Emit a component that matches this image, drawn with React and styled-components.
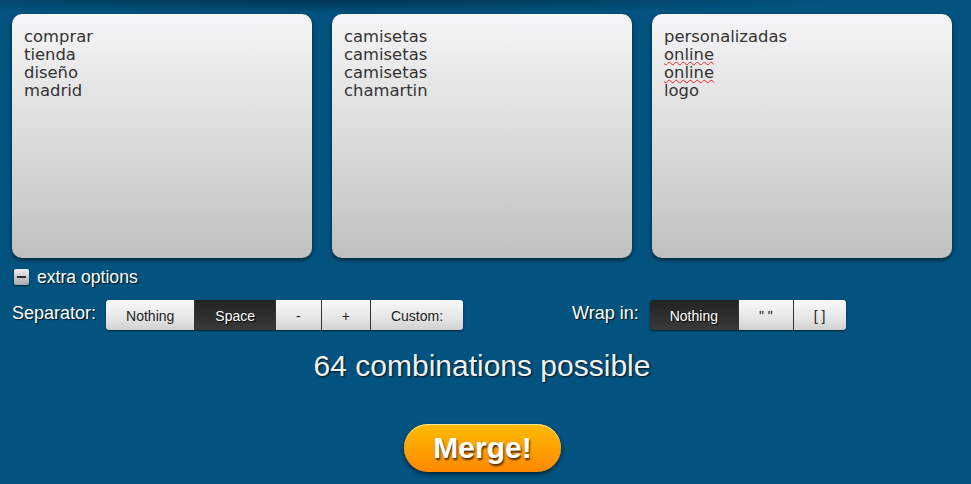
import React from "react";
import styled, { createGlobalStyle } from "styled-components";

const Global = createGlobalStyle`
  html, body { margin: 0; padding: 0; }
  body {
    background: #02537f;
    font-family: "Liberation Sans", Arial, sans-serif;
    width: 971px;
    height: 484px;
    overflow: hidden;
  }
`;

const Page = styled.div`
  position: relative;
  min-height: 484px;
  padding: 14px 12px 0 12px;
  box-sizing: border-box;
  background: radial-gradient(ellipse 520px 14px at 330px 0, rgba(0,0,0,0.35), rgba(0,0,0,0) 100%), #02537f;
`;

const Boxes = styled.div`
  display: grid;
  grid-template-columns: repeat(3, 300px);
  gap: 20px;
`;

const Box = styled.div`
  height: 244px;
  box-sizing: border-box;
  padding: 14px 12px;
  border-radius: 10px;
  background: linear-gradient(to bottom, #f6f5f7 0%, #dedede 45%, #c0c0c0 100%);
  box-shadow: 0 2px 4px rgba(0, 0, 0, 0.55);
  font-family: "DejaVu Sans", Verdana, sans-serif;
  font-size: 16.4px;
  line-height: 18px;
  color: #333;
`;

const Word = styled.div`
  white-space: nowrap;
  ${(p) =>
    p.$misspelled &&
    `text-decoration: underline wavy #e22;
     text-decoration-thickness: 1px;
     text-underline-offset: 1px;`}
`;

const Toggle = styled.div`
  display: flex;
  align-items: center;
  gap: 8px;
  margin-top: 10px;
  margin-left: 2px;
  height: 18px;
  color: #fff;
  font-size: 17.6px;
  text-shadow: 1px 1px 1px rgba(0, 0, 0, 0.8);
`;

const MinusIcon = styled.span`
  position: relative;
  width: 15px;
  height: 16px;
  border-radius: 2px;
  background: linear-gradient(to bottom, #f0f0f0, #a8a8a8);
  box-shadow: 0 1px 2px rgba(0, 0, 0, 0.6);
  &::after {
    content: "";
    position: absolute;
    left: 3px;
    right: 3px;
    top: 7px;
    height: 2px;
    background: #333;
  }
`;

const OptionsRow = styled.div`
  display: flex;
  align-items: center;
  margin-top: 14px;
`;

const Section = styled.div`
  display: flex;
  align-items: center;
  gap: ${(p) => p.$gap || 10}px;
  margin-left: ${(p) => p.$offset || 0}px;
`;

const Label = styled.span`
  color: #fff;
  font-size: 18px;
  text-shadow: 1px 1px 1px rgba(0, 0, 0, 0.8);
  margin-top: -3px;
`;

const Group = styled.div`
  display: flex;
  height: 30px;
  border-radius: 3px;
  overflow: hidden;
  box-shadow: 0 1px 2px rgba(0, 0, 0, 0.6);
`;

const Btn = styled.div`
  display: flex;
  align-items: center;
  padding: 2px 20px 0 20px;
  box-sizing: border-box;
  font-size: 14px;
  white-space: pre;
  color: ${(p) => (p.$active ? "#fff" : "#222")};
  background: ${(p) =>
    p.$active
      ? "linear-gradient(to bottom, #222 0%, #3a3a3a 100%)"
      : "linear-gradient(to bottom, #fafafa 0%, #e6e6e6 60%, #d0d0d0 100%)"};
  text-shadow: ${(p) => (p.$active ? "1px 1px 1px #000" : "none")};
  & + & {
    border-left: 1px solid ${(p) => (p.$active ? "#333" : "#a9a9a9")};
  }
`;

const Count = styled.div`
  margin-top: 19px;
  text-align: center;
  padding-right: 7px;
  color: #f2f2f2;
  font-size: 30px;
  line-height: 34px;
  text-shadow: 1px 1px 2px rgba(0, 0, 0, 0.8);
`;

const MergeWrap = styled.div`
  display: flex;
  justify-content: center;
  margin-top: 41px;
  padding-right: 6px;
`;

const Merge = styled.button`
  width: 157px;
  height: 48px;
  border: none;
  border-radius: 24px;
  background: linear-gradient(to bottom, #ffbb00 0%, #ffa000 55%, #ff8800 100%);
  box-shadow: inset 0 1px 0 rgba(255, 240, 180, 0.8), 0 2px 4px rgba(0, 0, 0, 0.6);
  color: #fff;
  font-family: "Liberation Sans", Arial, sans-serif;
  font-weight: bold;
  font-size: 30px;
  text-shadow: 1px 2px 2px rgba(60, 30, 0, 0.9);
  padding: 0;
  cursor: pointer;
`;

const columns = [
  [{ t: "comprar" }, { t: "tienda" }, { t: "diseño" }, { t: "madrid" }],
  [{ t: "camisetas" }, { t: "camisetas" }, { t: "camisetas" }, { t: "chamartin" }],
  [{ t: "personalizadas" }, { t: "online", m: true }, { t: "online", m: true }, { t: "logo" }],
];

export default function App() {
  return (
    <>
      <Global />
      <Page>
        <Boxes>
          {columns.map((col, i) => (
            <Box key={i}>
              {col.map((w, j) => (
                <Word key={j} $misspelled={w.m}>
                  {w.t}
                </Word>
              ))}
            </Box>
          ))}
        </Boxes>
        <Toggle>
          <MinusIcon />
          <span>extra options</span>
        </Toggle>
        <OptionsRow>
          <Section>
            <Label>Separator:</Label>
            <Group>
              <Btn>Nothing</Btn>
              <Btn $active>Space</Btn>
              <Btn>-</Btn>
              <Btn>+</Btn>
              <Btn>Custom:</Btn>
            </Group>
          </Section>
          <Section $offset={109} $gap={11}>
            <Label>Wrap in:</Label>
            <Group>
              <Btn $active>Nothing</Btn>
              <Btn>{'" "'}</Btn>
              <Btn>[ ]</Btn>
            </Group>
          </Section>
        </OptionsRow>
        <Count>64 combinations possible</Count>
        <MergeWrap>
          <Merge>Merge!</Merge>
        </MergeWrap>
      </Page>
    </>
  );
}
